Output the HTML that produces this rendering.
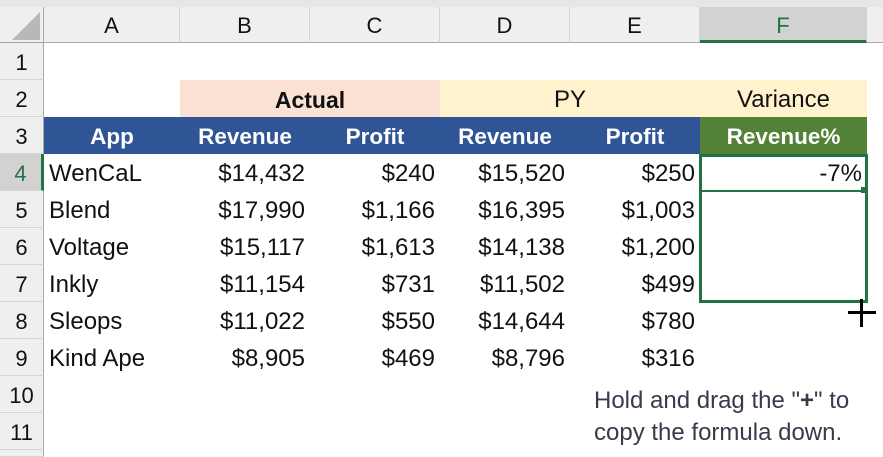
<!DOCTYPE html><html style="margin:0;height:457px;overflow:hidden"><head><style>
body{margin:0;width:883px;height:457px;background:#fff;position:relative;overflow:hidden;font-family:"Liberation Sans",sans-serif;}
div{position:absolute;box-sizing:border-box;}
.ch{top:7px;height:36px;background:#efefef;border-right:1px solid #d4d4d4;border-bottom:1px solid #a8a8a8;text-align:center;line-height:38px;font-size:22px;color:#111;}
.rh{left:0;width:44px;height:37px;background:#efefef;border-bottom:1px solid #d4d4d4;border-right:1px solid #a8a8a8;text-align:center;line-height:39px;font-size:22px;color:#111;}
.c{height:37px;line-height:40px;font-size:24px;color:#111;padding:0 5px;white-space:nowrap;}
.r{text-align:right}.m{text-align:center}
.h{color:#fff;font-weight:bold;text-align:center;font-size:22.5px;}
</style></head><body>
<div style="left:0;top:0;width:883px;height:7px;background:#e6e6e6"></div>
<div style="left:0;top:7px;width:44px;height:36px;background:#efefef;border-right:1px solid #a8a8a8;border-bottom:1px solid #a8a8a8"></div>
<div style="left:12px;top:12px;width:0;height:0;border-left:28px solid transparent;border-bottom:28px solid #b8b8b8"></div>
<div class="ch" style="left:44px;width:136px">A</div>
<div class="ch" style="left:180px;width:130px">B</div>
<div class="ch" style="left:310px;width:130px">C</div>
<div class="ch" style="left:440px;width:130px">D</div>
<div class="ch" style="left:570px;width:130px">E</div>
<div class="ch" style="left:700px;width:167px;background:#d2d2d2;color:#217346;border-bottom:3px solid #217346">F</div>
<div class="ch" style="left:867px;width:16px;border-right:none"></div>
<div class="rh" style="top:43px">1</div>
<div class="rh" style="top:80px">2</div>
<div class="rh" style="top:117px">3</div>
<div class="rh" style="top:154px;background:#d2d2d2;color:#217346;border-right:3px solid #217346">4</div>
<div class="rh" style="top:191px">5</div>
<div class="rh" style="top:228px">6</div>
<div class="rh" style="top:265px">7</div>
<div class="rh" style="top:302px">8</div>
<div class="rh" style="top:339px">9</div>
<div class="rh" style="top:376px">10</div>
<div class="rh" style="top:413px">11</div>
<div class="rh" style="top:450px;height:7px"></div>
<div class="c m" style="left:180px;top:80px;width:260px;background:#fbe2d5;font-weight:bold;font-size:23px">Actual</div>
<div class="c m" style="left:440px;top:80px;width:260px;background:#fff2cc">PY</div>
<div class="c m" style="left:700px;top:80px;width:167px;background:#fff2cc">Variance</div>
<div style="left:44px;top:117px;width:656px;height:37px;background:#2f5597"></div>
<div style="left:700px;top:117px;width:167px;height:37px;background:#538135"></div>
<div class="c h" style="left:44px;top:117px;width:136px">App</div>
<div class="c h" style="left:180px;top:117px;width:130px">Revenue</div>
<div class="c h" style="left:310px;top:117px;width:130px">Profit</div>
<div class="c h" style="left:440px;top:117px;width:130px">Revenue</div>
<div class="c h" style="left:570px;top:117px;width:130px">Profit</div>
<div class="c h" style="left:700px;top:117px;width:167px">Revenue%</div>
<div style="left:0;top:154px;width:883px">
<div class="c" style="left:44px;top:0;width:136px">WenCaL</div><div class="c r" style="left:180px;top:0;width:130px">$14,432</div><div class="c r" style="left:310px;top:0;width:130px">$240</div><div class="c r" style="left:440px;top:0;width:130px">$15,520</div><div class="c r" style="left:570px;top:0;width:130px">$250</div><div class="c r" style="left:700px;top:0;width:167px">-7%</div>
<div class="c" style="left:44px;top:37px;width:136px">Blend</div><div class="c r" style="left:180px;top:37px;width:130px">$17,990</div><div class="c r" style="left:310px;top:37px;width:130px">$1,166</div><div class="c r" style="left:440px;top:37px;width:130px">$16,395</div><div class="c r" style="left:570px;top:37px;width:130px">$1,003</div>
<div class="c" style="left:44px;top:74px;width:136px">Voltage</div><div class="c r" style="left:180px;top:74px;width:130px">$15,117</div><div class="c r" style="left:310px;top:74px;width:130px">$1,613</div><div class="c r" style="left:440px;top:74px;width:130px">$14,138</div><div class="c r" style="left:570px;top:74px;width:130px">$1,200</div>
<div class="c" style="left:44px;top:111px;width:136px">Inkly</div><div class="c r" style="left:180px;top:111px;width:130px">$11,154</div><div class="c r" style="left:310px;top:111px;width:130px">$731</div><div class="c r" style="left:440px;top:111px;width:130px">$11,502</div><div class="c r" style="left:570px;top:111px;width:130px">$499</div>
<div class="c" style="left:44px;top:148px;width:136px">Sleops</div><div class="c r" style="left:180px;top:148px;width:130px">$11,022</div><div class="c r" style="left:310px;top:148px;width:130px">$550</div><div class="c r" style="left:440px;top:148px;width:130px">$14,644</div><div class="c r" style="left:570px;top:148px;width:130px">$780</div>
<div class="c" style="left:44px;top:185px;width:136px">Kind Ape</div><div class="c r" style="left:180px;top:185px;width:130px">$8,905</div><div class="c r" style="left:310px;top:185px;width:130px">$469</div><div class="c r" style="left:440px;top:185px;width:130px">$8,796</div><div class="c r" style="left:570px;top:185px;width:130px">$316</div>
</div>
<div style="left:699px;top:154px;width:169px;height:149px;border:3px solid #217346"></div>
<div style="left:699px;top:190px;width:169px;height:2px;background:#217346"></div>
<div style="left:861px;top:187px;width:6px;height:6px;background:#217346"></div>
<div style="left:848px;top:311px;width:28px;height:3px;background:#000"></div>
<div style="left:860px;top:299px;width:3px;height:28px;background:#000"></div>
<div style="left:594px;top:385px;font-size:24px;color:#3a3a4a;line-height:32px;white-space:nowrap">Hold and drag the "<b>+</b>" to<br>copy the formula down.</div>
</body></html>
